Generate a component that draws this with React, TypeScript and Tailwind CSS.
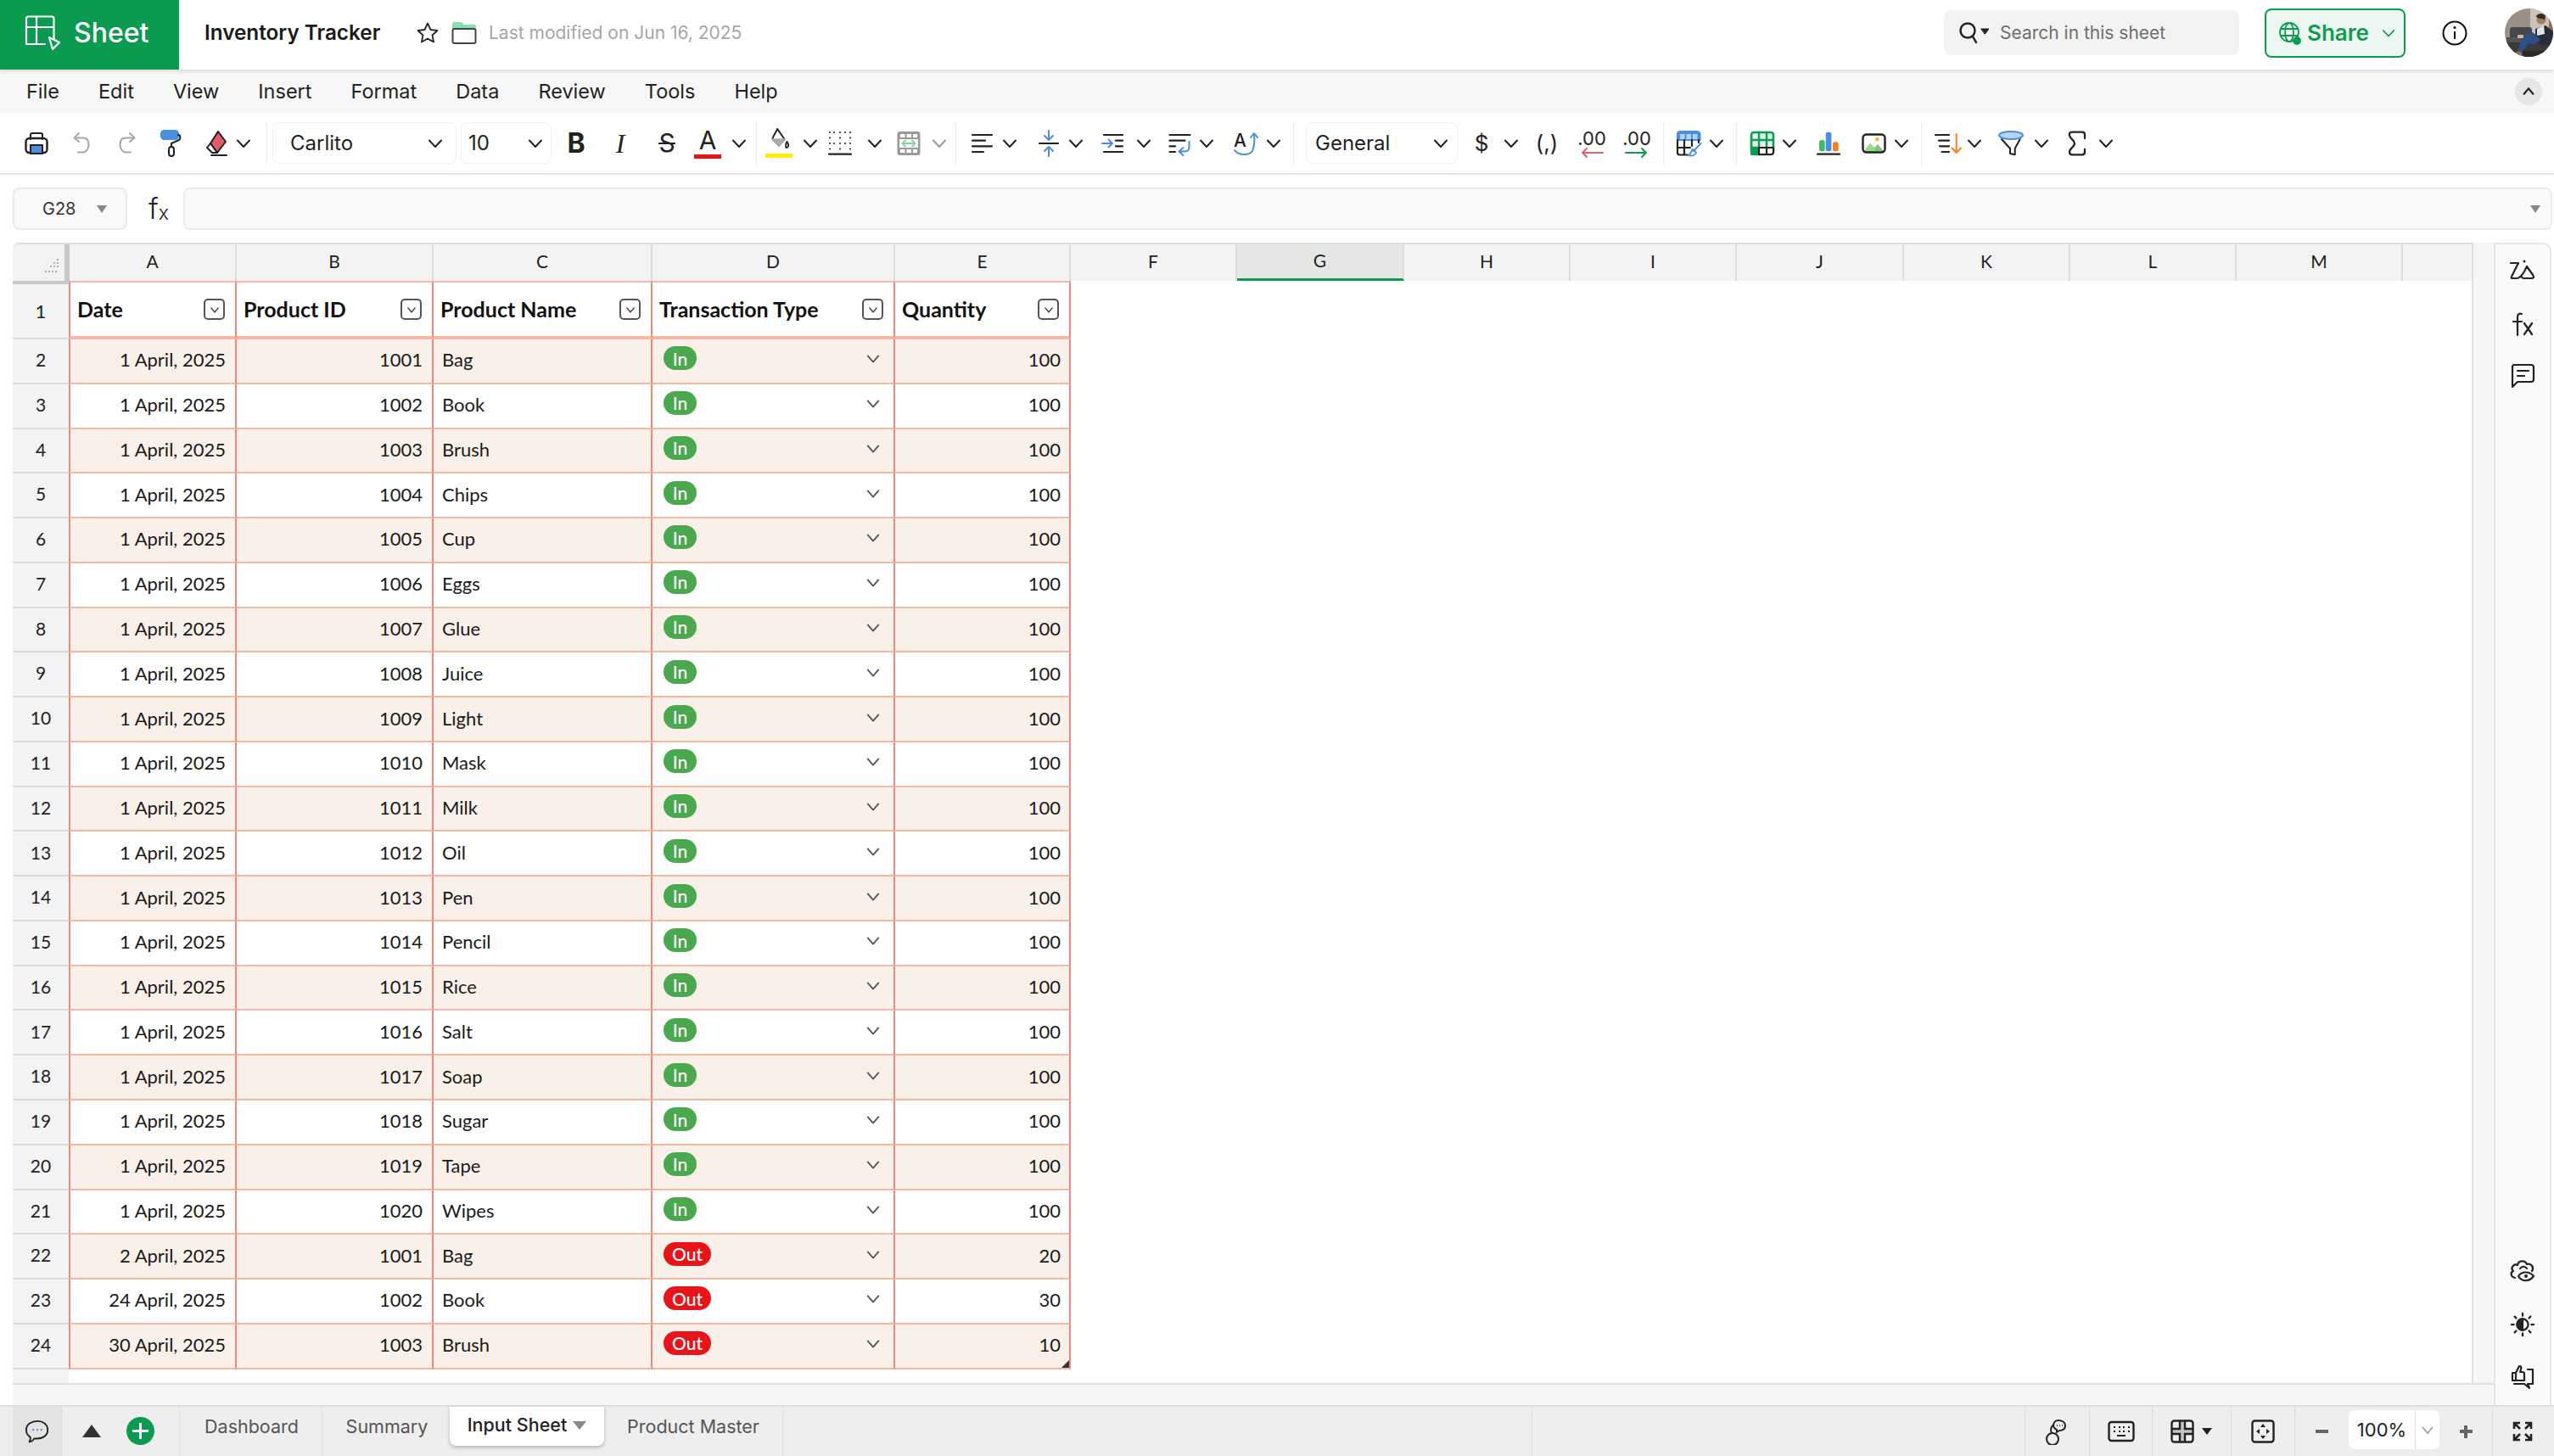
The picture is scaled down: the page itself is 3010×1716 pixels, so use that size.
import type { ReactNode } from "react";

const sans = "font-['Inter','Noto_Sans',sans-serif]";
const lato = "font-['Lato','Open_Sans',sans-serif]";

const products = ["Bag", "Book", "Brush", "Chips", "Cup", "Eggs", "Glue", "Juice", "Light", "Mask", "Milk", "Oil", "Pen", "Pencil", "Rice", "Salt", "Soap", "Sugar", "Tape", "Wipes"];

const rows = [
  ...products.map((name, i) => ({ date: "1 April, 2025", id: 1001 + i, name, type: "In", qty: 100 })),
  { date: "2 April, 2025", id: 1001, name: "Bag", type: "Out", qty: 20 },
  { date: "24 April, 2025", id: 1002, name: "Book", type: "Out", qty: 30 },
  { date: "30 April, 2025", id: 1003, name: "Brush", type: "Out", qty: 10 },
];

const columns = [
  { label: "A", w: "w-[197px]" },
  { label: "B", w: "w-[232px]" },
  { label: "C", w: "w-[258px]" },
  { label: "D", w: "w-[286px]" },
  { label: "E", w: "w-[207px]" },
  { label: "F", w: "w-[196px]" },
  { label: "G", w: "w-[197px]" },
  { label: "H", w: "w-[196px]" },
  { label: "I", w: "w-[196px]" },
  { label: "J", w: "w-[197px]" },
  { label: "K", w: "w-[196px]" },
  { label: "L", w: "w-[196px]" },
  { label: "M", w: "w-[196px]" },
];

function Ic({ className = "", children }: { className?: string; children: ReactNode }) {
  return (
    <svg viewBox="0 0 32 32" fill="none" stroke="#222" strokeWidth="2" strokeLinecap="round" strokeLinejoin="round" className={"h-[32px] w-[32px] shrink-0 " + className}>
      {children}
    </svg>
  );
}

function Chev({ className = "", grey = false }: { className?: string; grey?: boolean }) {
  return (
    <svg viewBox="0 0 20 20" fill="none" stroke={grey ? "#999" : "#222"} strokeWidth="2" strokeLinecap="round" strokeLinejoin="round" className={"h-[20px] w-[20px] shrink-0 " + className}>
      <path d="M3 6.500l7 7.500 7-7.500" />
    </svg>
  );
}

function Divider({ className = "" }: { className?: string }) {
  return <div className={"h-[50px] w-px shrink-0 bg-[#ececec] " + className} />;
}

function Select({ className, label, chev }: { className: string; label: string; chev: string }) {
  return (
    <div className={"flex h-[49px] shrink-0 items-center justify-between rounded-[8px] border border-[#f0f0f0] text-[24px] text-[#222] " + className}>
      <span>{label}</span>
      <Chev className={chev} />
    </div>
  );
}

function Toolbar() {
  return (
    <div className={"flex h-[73px] items-center border-b-2 border-[#e6e6e6] bg-white " + sans}>
      {/* print */}
      <Ic className="ml-[27px]">
        <path d="M9 11V5.500C9 4.500 10 4 11 4h10c1 0 2 .5 2 1.500V11" />
        <rect x="3.500" y="10" width="25" height="17" rx="4" strokeWidth="2.400" />
        <rect x="9" y="18" width="14" height="10" fill="#4a90e2" stroke="#222" />
      </Ic>
      {/* undo */}
      <Ic className="ml-[22px]">
        <g stroke="#a8a8a8">
          <path d="M12 4L6.500 9.500 12 14" />
          <path d="M7 9.500h10c4 0 6.500 3 6.500 8s-3 9-7 9H11" />
        </g>
      </Ic>
      {/* redo */}
      <Ic className="ml-[20px]">
        <g stroke="#a8a8a8">
          <path d="M20 4l5.500 5.500L20 14" />
          <path d="M25 9.500H15c-4 0-6.500 3-6.500 8s3 9 7 9H21" />
        </g>
      </Ic>
      {/* format painter */}
      <Ic className="ml-[19px]">
        <rect x="6" y="1" width="20" height="10" rx="3.500" fill="#4a90e2" stroke="#4a90e2" />
        <path d="M26 6c3 0 3 4 1 6l-9 4v4" />
        <rect x="15" y="20" width="6" height="11" rx="3" />
      </Ic>
      {/* clear */}
      <Ic className="ml-[23px]">
        <path d="M18 2l9 12-10 13-8-11z" fill="#e25b68" stroke="#222" />
        <path d="M9 16l8 11H11l-6-6z" fill="#fff" />
        <path d="M10 30h18" />
      </Ic>
      <Chev className="ml-[6px]" />
      <Divider className="ml-[17px]" />
      <Select className="ml-[6px] w-[217px] pl-[20px]" chev="mr-[14px]" label="Carlito" />
      <Select className="ml-[5px] w-[107px] pl-[8px]" chev="mr-[8px]" label="10" />
      <div className="ml-[13px] flex h-[32px] w-[32px] shrink-0 items-center justify-center text-[32px] font-bold text-[#222]">B</div>
      <div className="ml-[20px] flex h-[32px] w-[32px] shrink-0 items-center justify-center font-['Liberation_Serif',serif] text-[32px] italic text-[#222]">I</div>
      <div className="relative ml-[23px] flex h-[32px] w-[32px] shrink-0 items-center justify-center text-[30px] text-[#222]">
        S
        <span className="absolute left-[6px] right-[6px] top-[15px] h-[2px] bg-[#222]" />
      </div>
      <div className="ml-[16px] flex h-[38px] w-[32px] shrink-0 flex-col items-center text-[30px] leading-[30px] text-[#222]">
        A
        <span className="mt-[2px] h-[5px] w-[32px] bg-[#e81416]" />
      </div>
      <Chev className="ml-[11px]" />
      <Divider className="ml-[10px]" />
      {/* fill */}
      <div className="ml-[10px] flex h-[38px] w-[32px] shrink-0 flex-col items-center">
        <Ic className="!h-[30px]">
          <path d="M14 2l9 13-7 8-8-8c0-3 4-8 6-13z" />
          <path d="M8 15h15l-7 8z" fill="#aaa" stroke="#aaa" />
          <path d="M26 18c2 3 3 5 1 7s-4-1-1-7z" />
        </Ic>
        <span className="mt-[1px] h-[5px] w-[32px] shrink-0 bg-[#ffee00]" />
      </div>
      <Chev className="ml-[11px]" />
      {/* borders */}
      <Ic className="ml-[9px]">
        <path d="M4 3h.01M9 3h.01M16 3h.01M22 3h.01M28 3h.01M4 9.500h.01M16 9.500h.01M28 9.500h.01M4 16h.01M9 16h.01M16 16h.01M22 16h.01M28 16h.01M4 22.500h.01M16 22.500h.01M28 22.500h.01" stroke="#333" strokeWidth="2.200" />
        <path d="M3 28.700h26" strokeWidth="2.200" />
      </Ic>
      <Chev className="ml-[15px]" />
      {/* merge */}
      <Ic className="ml-[14px]">
        <rect x="2.500" y="2" width="27" height="28" rx="3" fill="#9a9a9a" stroke="none" />
        <path d="M6 5h5.500v4H6zM13.500 5h5.500v4h-5.500zM21 5h5v4h-5zM6 23h5.500v4H6zM13.500 23h5.500v4h-5.500zM21 23h5v4h-5zM5 11h22v10H5z" fill="#fff" stroke="none" />
        <path d="M9 16h14M12 12.500L8.500 16l3.500 3.500M20 12.500l3.500 3.500-3.500 3.500" stroke="#86d4a4" />
      </Ic>
      <Chev grey className="ml-[10px]" />
      <Divider className="ml-[9px]" />
      {/* align left */}
      <Ic className="ml-[14px]">
        <path d="M5 6h23M5 12.700h15M5 19.300h23M5 26h13" strokeWidth="2.200" />
      </Ic>
      <Chev className="ml-[7px]" />
      {/* vertical align */}
      <Ic className="ml-[20px]">
        <path d="M5 16h22" strokeWidth="2.200" />
        <g stroke="#4a90e2">
          <path d="M16 1v11M11 7l5 5 5-5M16 31V20M11 25l5-5 5 5" />
        </g>
      </Ic>
      <Chev className="ml-[6px]" />
      {/* indent */}
      <Ic className="ml-[18px]">
        <path d="M5 6h22M19 12.700h8M19 19.300h8M5 26h22" strokeWidth="2.200" />
        <path d="M3 16h12M10.500 11.500L15 16l-4.500 4.500" stroke="#4a90e2" />
      </Ic>
      <Chev className="ml-[10px]" />
      {/* wrap */}
      <Ic className="ml-[16px]">
        <path d="M4.500 6h24M4.500 12.700h18M4.500 19.300H11M4.500 26H11" strokeWidth="2.200" />
        <path d="M27.500 14v6c0 4-2 5.500-5 5.500h-6M20.500 21l-5 4.500 5 4.500" stroke="#4a90e2" />
      </Ic>
      <Chev className="ml-[6px]" />
      {/* rotate */}
      <div className="relative ml-[21px] h-[32px] w-[32px] shrink-0 text-[21px] font-medium leading-[24px] text-[#222]">
        <span className="absolute left-[1px] top-[1px]">A</span>
        <svg viewBox="0 0 32 32" fill="none" stroke="#4a90e2" strokeWidth="2" strokeLinecap="round" strokeLinejoin="round" className="absolute inset-0 h-[32px] w-[32px]">
          <path d="M2 24c4 6 17 7 21 1 2-5 3-12 2-20M21 9l4-5 4 5" />
        </svg>
      </div>
      <Chev className="ml-[6px]" />
      <Divider className="ml-[13px]" />
      <Select className="ml-[14px] w-[179px] pl-[10px]" chev="mr-[9px]" label="General" />
      <div className="ml-[12px] flex h-[32px] w-[32px] shrink-0 items-center justify-center text-[26px] text-[#222]">$</div>
      <Chev className="ml-[9px]" />
      <div className="ml-[16px] flex h-[32px] w-[32px] shrink-0 items-center justify-center whitespace-nowrap text-[26px] text-[#222]">(,)</div>
      <div className="ml-[21px] flex h-[34px] w-[32px] shrink-0 flex-col items-center">
        <span className="text-[22px] leading-[22px] text-[#222]">.00</span>
        <svg viewBox="0 0 32 12" fill="none" stroke="#e2636b" strokeWidth="2" strokeLinecap="round" strokeLinejoin="round" className="h-[12px] w-[32px] shrink-0">
          <path d="M29 6H5M10 1L5 6l5 5" />
        </svg>
      </div>
      <div className="ml-[21px] flex h-[34px] w-[32px] shrink-0 flex-col items-center">
        <span className="text-[22px] leading-[22px] text-[#222]">.00</span>
        <svg viewBox="0 0 32 12" fill="none" stroke="#0d9d50" strokeWidth="2" strokeLinecap="round" strokeLinejoin="round" className="h-[12px] w-[32px] shrink-0">
          <path d="M3 6h24M22 1l5 5-5 5" />
        </svg>
      </div>
      <Divider className="ml-[15px]" />
      {/* pivot */}
      <Ic className="ml-[13px]">
        <path d="M3 12V5c0-1.500 1-3 3-3h20c2 0 3.500 1.500 3.500 3v7z" fill="#4a90e2" stroke="#4a90e2" />
        <path d="M6 5h5.500v6H6zM13.500 5H19v6h-5.500zM21 5h5.500v6H21z" fill="#b7d3f4" stroke="none" />
        <path d="M3 12v15c0 1.500 1 2.500 2.500 2.500H15M3 21h15M11 12v17M20 12v7M28 12v3" strokeWidth="2.200" />
        <path d="M30.500 16L22 25M21 23c-2 2-2 5-5 7 4 1 8 0 9-3z" stroke="#4a90e2" fill="#fff" />
      </Ic>
      <Chev className="ml-[7px]" />
      <Divider className="ml-[13px]" />
      {/* table */}
      <Ic className="ml-[14px]">
        <rect x="3" y="3" width="26" height="26" rx="3" fill="#dff3e6" stroke="#0d9d50" strokeWidth="2.600" />
        <path d="M3 12h26M12 3v18M21 3v18M3 21h9" stroke="#0d9d50" strokeWidth="2.400" />
        <rect x="3" y="21" width="9" height="8" fill="#0d9d50" stroke="#0d9d50" />
        <rect x="12" y="21" width="17" height="8" fill="#fff" stroke="none" />
        <path d="M12 21h17v5c0 2-1 3-3 3H12zM21 21v8" strokeWidth="2.200" />
      </Ic>
      <Chev className="ml-[6px]" />
      {/* chart */}
      <Ic className="ml-[20px]">
        <rect x="5" y="12" width="6.700" height="13.300" rx="2.500" fill="#46b86a" stroke="none" />
        <rect x="12.700" y="2.700" width="6.700" height="22.600" rx="2.500" fill="#4a90e2" stroke="none" />
        <rect x="21" y="14.300" width="6.700" height="11" rx="2.500" fill="#f5821f" stroke="none" />
        <path d="M3 28.700h26" strokeWidth="2.200" />
      </Ic>
      {/* image */}
      <Ic className="ml-[21px]">
        <path d="M5 25l7-9 5 5 4-4 7 8z" fill="#82c48a" stroke="none" />
        <path d="M4.500 26l7.500-10 8 10z" fill="#9bdc82" stroke="none" />
        <rect x="3.500" y="5.500" width="26" height="21" rx="4" strokeWidth="2.400" />
        <circle cx="20.300" cy="11.300" r="2.200" fill="#f9b51b" stroke="none" />
      </Ic>
      <Chev className="ml-[7px]" />
      <Divider className="ml-[13px]" />
      {/* sort */}
      <Ic className="ml-[15px]">
        <path d="M1 6h16M5 12.700h12M6 19.300h11M8.500 26H17" strokeWidth="2.200" />
        <path d="M25.700 5v22M20.500 21.500l5.200 5.500 5.200-5.500" stroke="#f5821f" />
      </Ic>
      <Chev className="ml-[5px]" />
      {/* filter */}
      <Ic className="ml-[17px]">
        <path d="M5 11l10 11v6l5.700 1.300V22L26.700 11" />
        <ellipse cx="16" cy="6.500" rx="14" ry="4.500" fill="#b6d4f5" stroke="#4a90e2" />
      </Ic>
      <Chev className="ml-[10px]" />
      {/* functions */}
      <Ic className="ml-[16px]">
        <path d="M25 10V6c0-2-1-3.300-3-3.300H10c-3 0-3.500 2-3 4C8 11 13 12 13 16s-6 6-6 10c0 2 1 3.300 3 3.300h12c2 0 3-1 3-3.300v-3" strokeWidth="2.300" />
      </Ic>
      <Chev className="ml-[8px]" />
    </div>
  );
}

function TopBar() {
  return (
    <div className={"relative z-10 flex h-[82px] bg-white shadow-[0_2px_4px_rgba(0,0,0,0.12)] " + sans}>
      <div className="flex h-full w-[211px] items-center bg-[#0a9a50] pb-[5px]">
        <svg viewBox="0 0 44 42" fill="none" stroke="#fff" strokeWidth="2.200" strokeLinejoin="round" className="ml-[28px] h-[42px] w-[44px]">
          <path d="M26 34H3V4c0-1.500 1-2.500 2.500-2.500H33c1.500 0 2.500 1 2.500 2.500v24" />
          <path d="M3 14h32M3 34h23M15 2v32" />
          <path d="M30 26l12 6-8 8z" />
        </svg>
        <span className="ml-[15px] text-[32px] font-medium leading-none text-white">Sheet</span>
      </div>
      <div className="flex flex-1 items-center pb-[5px]">
        <span className="ml-[30px] w-[208px] whitespace-nowrap text-[24.300px] font-semibold text-[#1a1a1a]">Inventory Tracker</span>
        <svg viewBox="0 0 28 28" fill="none" stroke="#222" strokeWidth="1.800" strokeLinejoin="round" className="ml-[41px] h-[28px] w-[28px]">
          <path d="M14 2.500l3.500 7.500 8 1-6 5.500 1.600 8L14 20.500 6.900 24.500l1.600-8-6-5.500 8-1z" />
        </svg>
        <svg viewBox="0 0 30 28" className="ml-[14px] h-[28px] w-[30px]">
          <path d="M1 13V3c0-1 1-2 2-2h9l3 3h12c1 0 2 1 2 2v7z" fill="#7fe3ab" />
          <rect x="1.500" y="9" width="27" height="17" rx="2" fill="#fff" stroke="#444" strokeWidth="2" />
        </svg>
        <span className="ml-[14px] whitespace-nowrap text-[21px] text-[#a6a6a6]">Last modified on Jun 16, 2025</span>

        <div className="ml-auto flex h-[53px] w-[348px] items-center rounded-[8px] bg-[#f3f3f3]">
          <svg viewBox="0 0 40 32" fill="none" stroke="#222" strokeWidth="2.500" strokeLinecap="round" className="ml-[16px] h-[32px] w-[40px]">
            <circle cx="12" cy="13" r="8.500" />
            <path d="M18 20l4 7" />
            <path d="M28 11h9l-4.500 6z" fill="#222" strokeWidth="1" />
          </svg>
          <span className="ml-[10px] whitespace-nowrap text-[21px] text-[#6f6f6f]">Search in this sheet</span>
        </div>
        <div className="ml-[30px] flex h-[58px] w-[166px] items-center rounded-[8px] border-2 border-[#0d9d50] bg-[#edf7f1]">
          <svg viewBox="0 0 28 28" fill="none" stroke="#0d9d50" strokeWidth="1.800" className="ml-[14px] h-[28px] w-[28px]">
            <circle cx="13" cy="13" r="11" />
            <ellipse cx="13" cy="13" rx="5" ry="11" />
            <path d="M2 9h22M2 17h22" />
            <circle cx="22" cy="23" r="4" fill="#0d9d50" />
          </svg>
          <span className="ml-[6px] text-[26px] font-semibold text-[#0d9d50]">Share</span>
          <svg viewBox="0 0 20 20" fill="none" stroke="#0d9d50" strokeWidth="1.800" strokeLinecap="round" className="ml-[14px] h-[18px] w-[18px]">
            <path d="M3 6.500l7 7.500 7-7.500" />
          </svg>
        </div>
        <svg viewBox="0 0 30 30" fill="none" stroke="#111" strokeWidth="2" className="ml-[43px] h-[30px] w-[30px]">
          <circle cx="15" cy="15" r="13.500" />
          <path d="M15 13v9" />
          <circle cx="15" cy="8.500" r="1.500" fill="#111" stroke="none" />
        </svg>
        <svg viewBox="0 0 57 57" className="ml-[44px] mr-[1px] h-[57px] w-[57px] shrink-0">
          <clipPath id="avatar">
            <circle cx="28.500" cy="28.500" r="28.500" />
          </clipPath>
          <g clipPath="url(#avatar)">
            <rect width="57" height="57" fill="#9c9086" />
            <rect x="30" width="27" height="30" fill="#c9c4b8" />
            <rect x="52" width="5" height="30" fill="#8f6d5a" />
            <rect x="6" y="22" width="26" height="18" rx="3" fill="#45474a" />
            <rect x="2" y="34" width="32" height="6" fill="#57524e" />
            <rect x="0" y="40" width="57" height="17" fill="#3a3a3a" />
            <path d="M0 50h57v7H0z" fill="#2c2a28" />
            <circle cx="43" cy="13" r="5.500" fill="#a77c62" />
            <path d="M37 9c2-4 9-4 11 0l-1 4-9-2z" fill="#3a2c25" />
            <path d="M36 24l12-4 9 7v16l-12 1-9-6z" fill="#2a2d38" />
            <path d="M38 24l8-4 1 10-9 2z" fill="#e3e5ea" />
            <path d="M21 32l12-4 9 9-8 6-6-2-8 11h-5z" fill="#2f4f88" />
            <path d="M16 50l4 2 1 4-8 0-2-4z" fill="#9b6a43" />
            <rect x="15" y="31" width="7" height="4" rx="1" fill="#d7b29a" />
          </g>
        </svg>
      </div>
    </div>
  );
}

function MenuBar() {
  return (
    <div className={"flex h-[51px] items-center bg-[#f7f7f7] text-[23.500px] text-[#222] " + sans}>
      <span className="ml-[31px]">File</span>
      <span className="ml-[46px]">Edit</span>
      <span className="ml-[46px]">View</span>
      <span className="ml-[46px]">Insert</span>
      <span className="ml-[46px]">Format</span>
      <span className="ml-[46px]">Data</span>
      <span className="ml-[46px]">Review</span>
      <span className="ml-[46px]">Tools</span>
      <span className="ml-[46px]">Help</span>
      <div className="ml-auto mr-[14px] flex h-[32px] w-[32px] items-center justify-center rounded-full bg-[#e6e6e6]">
        <svg viewBox="0 0 20 20" fill="none" stroke="#222" strokeWidth="2.400" strokeLinecap="round" className="h-[18px] w-[18px]">
          <path d="M4 13l6-7 6 7" />
        </svg>
      </div>
    </div>
  );
}

function FormulaBar() {
  return (
    <div className={"flex h-[80px] items-start bg-white pl-[15px] pr-[2px] pt-[15px] " + sans}>
      <div className="flex h-[50px] w-[135px] items-center rounded-[8px] border-2 border-[#ebebeb] bg-[#f9f9f9]">
        <span className="ml-[33px] text-[20px] text-[#333]">G28</span>
        <span className="ml-[24px] h-0 w-0 border-x-[6px] border-t-[9px] border-x-transparent border-t-[#888]" />
      </div>
      <div className="flex h-[50px] w-[66px] items-center justify-center pl-[8px] text-[#222]">
        <span className="text-[34px] font-light leading-none">f</span>
        <span className="mt-[10px] text-[23px] font-light leading-none">x</span>
      </div>
      <div className="flex h-[50px] flex-1 items-center justify-end rounded-[8px] border-2 border-[#ebebeb] bg-[#f9f9f9] pr-[12px]">
        <span className="h-0 w-0 border-x-[6px] border-t-[9px] border-x-transparent border-t-[#888]" />
      </div>
    </div>
  );
}

function FilterBtn() {
  return (
    <div className="flex h-[25px] w-[25px] shrink-0 items-center justify-center rounded-[5px] border-2 border-[#555] bg-white">
      <svg viewBox="0 0 20 20" fill="none" stroke="#444" strokeWidth="2" strokeLinecap="round" className="h-[14px] w-[14px]">
        <path d="M4 7l6 7 6-7" />
      </svg>
    </div>
  );
}

const cellBorder = "border-r-2 border-b-2 border-r-[#f0897d] border-b-[#f5b9a3]";

function HeaderCell({ label, w, first = false }: { label: string; w: string; first?: boolean }) {
  return (
    <div className={"flex h-full shrink-0 items-center justify-between border-r-2 border-t-2 border-b-[4px] border-r-[#f0897d] border-t-[#f5b9a3] border-b-[#f5b9a3] bg-white pl-[8px] pr-[12px] " + w + (first ? " border-l-2 border-l-[#f0897d]" : "")}>
      <span className="whitespace-nowrap text-[25px] font-bold text-[#111]">{label}</span>
      <FilterBtn />
    </div>
  );
}

function Sheet() {
  return (
    <div className={"flex min-w-0 flex-1 flex-col overflow-hidden rounded-tl-[8px] border-t-2 border-[#dcdcdc] " + lato}>
      {/* column letters */}
      <div className="flex h-[43px] shrink-0">
        <div className="flex h-full w-[67px] shrink-0 items-end justify-end border-r-[6px] border-[#c8c8c8] bg-[#f3f3f3] pb-[9px] pr-[6px]">
          <svg viewBox="0 0 18 18" fill="#999" className="h-[18px] w-[18px]">
            <circle cx="16" cy="2" r="1" />
            <circle cx="12" cy="6" r="1" /><circle cx="16" cy="6" r="1" />
            <circle cx="8" cy="10" r="1" /><circle cx="12" cy="10" r="1" /><circle cx="16" cy="10" r="1" />
            <circle cx="2" cy="16" r="1" /><circle cx="6" cy="16" r="1" /><circle cx="10" cy="16" r="1" /><circle cx="14" cy="16" r="1" />
          </svg>
        </div>
        {columns.map((c) => (
          <div key={c.label} className={"flex h-full shrink-0 items-center justify-center border-r-2 border-[#dcdcdc] pb-[3px] text-[21px] text-[#222] " + c.w + (c.label === "G" ? " border-b-[3px] border-b-[#0d9d50] bg-[#e5e7e5]" : " bg-[#f3f3f3]")}>
            {c.label}
          </div>
        ))}
        <div className="h-full flex-1 bg-[#f3f3f3]" />
      </div>
      {/* row 1 */}
      <div className="flex h-[69px] shrink-0">
        <div className="flex h-full w-[66px] shrink-0 items-center justify-center border-b-2 border-t-[4px] border-b-[#dcdcdc] border-t-[#c8c8c8] bg-[#f3f3f3] text-[22px] text-[#222]">1</div>
        <HeaderCell first label="Date" w="w-[198px]" />
        <HeaderCell label="Product ID" w="w-[232px]" />
        <HeaderCell label="Product Name" w="w-[258px]" />
        <HeaderCell label="Transaction Type" w="w-[286px]" />
        <HeaderCell label="Quantity" w="w-[207px]" />
      </div>
      {/* data */}
      {rows.map((r, i) => {
        const tint = i % 2 === 0 ? "bg-[#f9f0ea]" : "bg-white";
        return (
          <div key={i} className="flex h-[52.780px] shrink-0 text-[22px] text-[#1a1a1a]">
            <div className="flex h-full w-[66px] shrink-0 items-center justify-center border-b-2 border-[#dcdcdc] bg-[#f3f3f3] pb-[3px] text-[21px] text-[#222]">{i + 2}</div>
            <div className={"flex h-full w-[198px] shrink-0 items-center justify-end border-l-2 border-l-[#f0897d] pb-[3px] pr-[11px] " + cellBorder + " " + tint}>{r.date}</div>
            <div className={"flex h-full w-[232px] shrink-0 items-center justify-end pb-[3px] pr-[11px] " + cellBorder + " " + tint}>{r.id}</div>
            <div className={"flex h-full w-[258px] shrink-0 items-center pb-[3px] pl-[10px] " + cellBorder + " " + tint}>{r.name}</div>
            <div className={"flex h-full w-[286px] shrink-0 items-center justify-between pl-[13px] pr-[15px] " + cellBorder + " " + tint}>
              <span className={"mb-[6px] flex h-[28px] items-center justify-center rounded-full text-[21px] font-medium text-white " + (r.type === "In" ? "w-[39px] bg-[#4aa84f]" : "w-[56px] bg-[#e8141a]")}>{r.type}</span>
              <svg viewBox="0 0 20 20" fill="none" stroke="#555" strokeWidth="2" strokeLinecap="round" strokeLinejoin="round" className="mb-[4px] h-[18px] w-[18px]">
                <path d="M3 6l7 8 7-8" />
              </svg>
            </div>
            <div className={"relative flex h-full w-[207px] shrink-0 items-center justify-end pb-[3px] pr-[10px] " + cellBorder + " " + tint}>
              {r.qty}
              {i === rows.length - 1 && <span className="absolute bottom-0 right-0 h-0 w-0 border-b-[9px] border-l-[9px] border-b-[#333] border-l-transparent" />}
            </div>
          </div>
        );
      })}
      <div className="h-[16px] w-[66px] shrink-0 bg-[#f3f3f3]" />
    </div>
  );
}

function RightPanel() {
  return (
    <div className="flex w-[68px] shrink-0 flex-col items-center rounded-tr-[10px] border-x-2 border-t-2 border-[#e6e6e6] bg-[#fafafa]">
      <svg viewBox="0 0 32 32" fill="none" stroke="#222" strokeWidth="2.200" strokeLinecap="round" strokeLinejoin="round" className="mt-[14px] h-[32px] w-[32px]">
        <path d="M2 8h9L3 24c-1 2 0 2 2 2h4c3 0 6-3 9-8l3-6 7 10c2 3 1 4-2 4H18c-3 0-4-2-3-4" />
        <circle cx="18" cy="6" r="1.500" fill="#222" stroke="none" />
      </svg>
      <svg viewBox="0 0 32 32" fill="none" stroke="#222" strokeWidth="2.200" strokeLinecap="round" className="mt-[32px] h-[32px] w-[32px]">
        <path d="M15 4c-3-1-5 0-5 4v21M5 13h10M18 15l9 13M27 15l-9 13" />
      </svg>
      <svg viewBox="0 0 32 32" fill="none" stroke="#222" strokeWidth="2.200" strokeLinecap="round" strokeLinejoin="round" className="mt-[29px] h-[32px] w-[32px]">
        <path d="M6 3h20c2 0 3 1 3 3v14c0 2-1 3-3 3H10l-6 6V6c0-2 1-3 2-3z" />
        <path d="M10 10h13M10 16h8" />
      </svg>
      <svg viewBox="0 0 32 32" fill="none" stroke="#222" strokeWidth="2.200" strokeLinecap="round" strokeLinejoin="round" className="mt-auto h-[32px] w-[32px]">
        <path d="M7 23C2 22 1 17 5 15 1 11 6 6 10 8c1-6 9-6 11-1 5-2 9 4 6 8" />
        <path d="M11 21c4-6 13-6 18 0-5 7-14 7-18 0z" />
        <circle cx="20" cy="21" r="2" fill="#222" stroke="none" />
        <path d="M13 12c2-3 6-3 8 0" />
      </svg>
      <svg viewBox="0 0 32 32" fill="none" stroke="#222" strokeWidth="2.400" strokeLinecap="round" className="mt-[31px] h-[30px] w-[30px]">
        <circle cx="16" cy="16" r="7" />
        <path d="M16 9a7 7 0 0 1 0 14z" fill="#222" transform="rotate(180 16 16)" />
        <path d="M16 2v3M16 27v3M2 16h3M27 16h3M6 6l2 2M24 24l2 2M6 26l2-2M24 8l2-2" />
      </svg>
      <svg viewBox="0 0 32 32" fill="none" stroke="#222" strokeWidth="2.200" strokeLinecap="round" strokeLinejoin="round" className="mb-[17px] mt-[31px] h-[32px] w-[32px]">
        <path d="M4 11h4v9H4zM8 11l4-8c2 0 3 1 2 4l-1 3h3c1 0 2 1 2 2v8H8" />
        <path d="M22 7h6v17h-6l2 5-6-5H6" />
      </svg>
    </div>
  );
}

function TabsBar() {
  return (
    <div className={"flex h-[60px] items-stretch border-t-2 border-[#dedede] bg-[#eeeeee] text-[21.500px] text-[#555] " + sans}>
      <div className="ml-[15px] flex w-[58px] items-center justify-center border-r border-[#dcdcdc] bg-[#e3e3e3]">
        <svg viewBox="0 0 32 32" fill="none" stroke="#222" strokeWidth="2" strokeLinejoin="round" className="h-[30px] w-[30px]">
          <path d="M16 3c7 0 13 4 13 11s-6 11-13 11c-2 0-3 0-4 0-1 2-3 4-6 4 1-2 2-4 1-6-3-2-5-5-5-9C2 7 9 3 16 3z" />
          <path d="M10 14h2M15 14h2M20 14h2" stroke="#4a90e2" strokeWidth="2.500" />
        </svg>
      </div>
      <span className="ml-[24px] mt-[21px] h-0 w-0 border-x-[11px] border-b-[15px] border-x-transparent border-b-[#333]" />
      <div className="ml-[30px] mt-[12px] flex h-[33px] w-[33px] items-center justify-center rounded-full bg-[#0a9a50]">
        <span className="relative h-[19px] w-[3px] bg-white after:absolute after:left-[-8px] after:top-[8px] after:h-[3px] after:w-[19px] after:bg-white" />
      </div>
      <div className="ml-[29px] w-px bg-[#dfdfdf]" />
      <div className="flex w-[167px] items-center justify-center pb-[12px] pl-[2px]">Dashboard</div>
      <div className="w-px bg-[#dfdfdf]" />
      <div className="flex w-[150px] items-center justify-center pb-[12px] pl-[2px]">Summary</div>
      <div className="flex h-[46px] w-[182px] items-center justify-center gap-[7px] rounded-b-[8px] bg-white pb-[3px] font-medium text-[#222] shadow-[0_2px_4px_rgba(0,0,0,0.25)]">
        Input Sheet
        <span className="h-0 w-0 border-x-[8px] border-t-[10px] border-x-transparent border-t-[#888]" />
      </div>
      <div className="flex w-[210px] items-center justify-center pb-[12px]">Product Master</div>
      <div className="w-px bg-[#dfdfdf]" />

      <div className="ml-[882px] w-px bg-[#e2e2e2]" />
      <div className="ml-[580px] flex w-[76px] items-center justify-center border-l border-[#dcdcdc] pr-[3px]">
        <svg viewBox="0 0 32 32" fill="none" stroke="#222" strokeWidth="2" className="h-[32px] w-[32px]">
          <path d="M14 8c-4 2-5 6-3 10" />
          <circle cx="12" cy="25" r="7" />
          <path d="M19 3c4 0 8 2 8 6s-3 6-7 6l-3 2 0-3c-2-1-4-3-4-5 0-4 3-6 6-6z" />
          <path d="M17 9h1M20 9h1M23 9h1" strokeWidth="1.500" />
        </svg>
      </div>
      <div className="flex w-[74px] items-center justify-center border-l border-[#dcdcdc]">
        <svg viewBox="0 0 32 26" fill="none" stroke="#222" strokeWidth="2.400" className="h-[26px] w-[32px]">
          <rect x="1.500" y="2" width="29" height="22" rx="3" />
          <path d="M7 8h2M13 8h2M18 8h2M24 8h2M7 13h2M13 13h2M18 13h2M24 13h2M11 18h10" strokeWidth="2" />
        </svg>
      </div>
      <div className="flex w-[93px] items-center justify-start border-l border-[#dcdcdc] pl-[21px]">
        <svg viewBox="0 0 28 28" fill="none" stroke="#222" strokeWidth="2.400" className="h-[28px] w-[28px]">
          <path d="M11 1.500h6v9.500h9.500v6H17v9.500h-6V17H1.500v-6H11z" fill="#c4c4c4" stroke="none" />
          <rect x="1.500" y="1.500" width="25" height="25" rx="3" />
          <path d="M11 1.500V11H1.500M17 1.500V11h9.500M11 26.500V17H1.500M17 26.500V17h9.500" />
        </svg>
        <span className="ml-[9px] h-0 w-0 border-x-[6px] border-t-[8px] border-x-transparent border-t-[#222]" />
      </div>
      <div className="flex w-[75px] items-center justify-center border-l border-[#dcdcdc]">
        <svg viewBox="0 0 28 28" fill="none" stroke="#222" strokeWidth="2.400" className="h-[28px] w-[28px]">
          <rect x="1.500" y="1.500" width="25" height="25" rx="3" />
          <path d="M14 5l-3 4h6zM14 23l-3-4h6zM6 14l4-3v6zM22 14l-4-3v6z" fill="#222" stroke="none" />
        </svg>
      </div>
      <div className="flex w-[64px] items-center justify-center border-l border-[#dcdcdc]">
        <span className="h-[4px] w-[15px] bg-[#666]" />
      </div>
      <div className="mt-[4px] flex h-[46px] w-[107px] items-center rounded-[8px] bg-white text-[#222]">
        <span className="w-[79px] border-r border-[#dcdcdc] text-center text-[22px] leading-[46px]">100%</span>
        <svg viewBox="0 0 20 20" fill="none" stroke="#999" strokeWidth="1.500" className="ml-[4px] h-[20px] w-[20px]">
          <path d="M4 7l6 7 6-7" />
        </svg>
      </div>
      <div className="flex w-[62px] items-center justify-center">
        <span className="relative h-[15px] w-[4px] bg-[#666] after:absolute after:left-[-5.500px] after:top-[5.500px] after:h-[4px] after:w-[15px] after:bg-[#666]" />
      </div>
      <div className="flex w-[70px] items-center justify-center border-l border-[#dcdcdc]">
        <svg viewBox="0 0 24 24" fill="none" stroke="#222" strokeWidth="2.600" className="h-[24px] w-[24px]">
          <path d="M2 9V2h7M2 2l7 7M22 9V2h-7M22 2l-7 7M2 15v7h7M2 22l7-7M22 15v7h-7M22 22l-7-7" />
        </svg>
      </div>
    </div>
  );
}

export default function App() {
  return (
    <div className="flex h-[1716px] w-[3010px] flex-col overflow-hidden bg-white">
      <TopBar />
      <MenuBar />
      <Toolbar />
      <FormulaBar />
      <div className="flex min-h-0 flex-1 pl-[15px] pr-[3px]">
        <div className="flex min-w-0 flex-1 flex-col">
          <div className="flex min-h-0 flex-1">
            <Sheet />
            <div className="w-[26px] shrink-0 border-l-2 border-[#e0e0e0] bg-[#f6f6f6]" />
          </div>
          <div className="h-[26px] shrink-0 border-t-2 border-[#e0e0e0] bg-[#f6f6f6]" />
        </div>
        <RightPanel />
      </div>
      <TabsBar />
    </div>
  );
}
